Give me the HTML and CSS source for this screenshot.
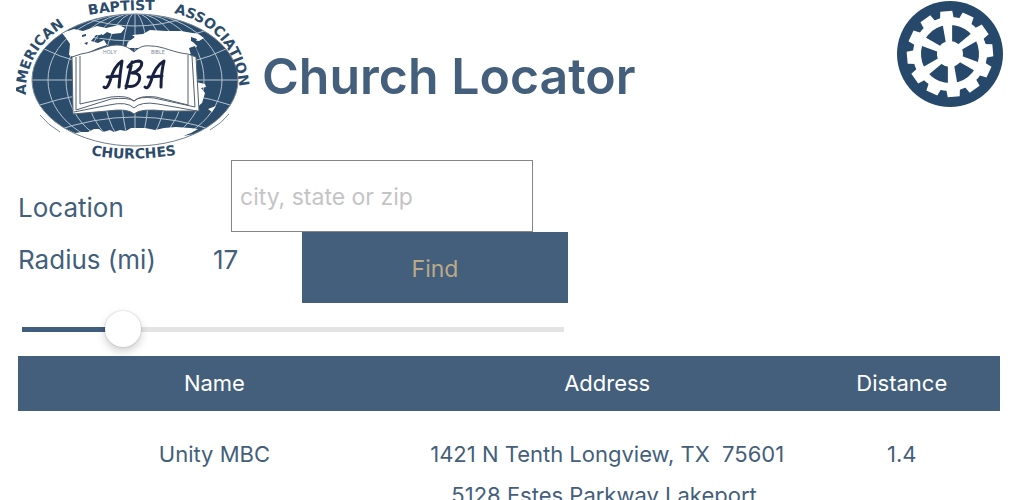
FILE: index.html
```
<!DOCTYPE html>
<html lang="en">
<head>
<meta charset="utf-8">
<meta name="viewport" content="width=device-width, initial-scale=1">
<title>Church Locator</title>
<link rel="stylesheet" href="styles.css">
</head>
<body>
<header class="header">
  <svg class="logo" viewBox="16 0 236 160" role="img" aria-label="American Baptist Association Churches">
    <defs>
      <clipPath id="globe"><ellipse cx="135" cy="80" rx="103" ry="66"/></clipPath>
      <path id="arc-left" d="M26 95 C25 62 41 36 80 18"/>
      <path id="arc-mid" d="M89 15 Q121 9 165 10"/>
      <path id="arc-right" d="M174 13 C212 22 239 48 240 98"/>
      <path id="arc-bottom" d="M91 155 Q134 163 188 153"/>
    </defs>
    <g clip-path="url(#globe)">
      <rect x="30" y="12" width="210" height="136" fill="#2c4c6c"/>
      <g class="grid-lines">
        <ellipse cx="135" cy="80" rx="87" ry="67"/>
        <ellipse cx="135" cy="80" rx="69" ry="67"/>
        <ellipse cx="135" cy="80" rx="50" ry="67"/>
        <ellipse cx="135" cy="80" rx="32" ry="67"/>
        <ellipse cx="135" cy="80" rx="14" ry="67"/>
        <path d="M30 80H240M135 14V146M35 45Q135 95 235 45M55 28Q135 54 215 28M85 18Q135 34 185 18M33 107Q135 73 237 107M52 132Q135 102 218 132"/>
      </g>
      <path fill="#fff" d="M62 33L74 29L83 31L97 26L106 28L119 25L125 28L121 33L112 34L107 32L103 35L96 35L91 41L98 43L104 40L107 45L98 48L89 52L83 57L75 58L69 55L70 44L66 38Z"/>
      <path fill="#fff" d="M126 48L128 42L135 37L132 35L143 34L150 30L166 31L181 31L198 34L204 38L199 41L191 40L197 46L192 54L157 54L148 50L140 48Z"/>
      <path fill="#fff" d="M196 82L205 84L206 87L201 88L205 93L202 103L196 108ZM208 109L216 106L212 112ZM66 129L75 133L82 132L88 132L94 129L99 129L103 132L110 130L114 132L120 130L126 131L131 128L145 128L155 130L164 128L176 127L190 128L198 129L191 133L183 136L201 133L190 148H80Z"/>
      <path fill="#2c4c6c" d="M82 35l4-1 0 2-4 1zM84 43l4-1-1 3zM98 36l4-2 1 3-5 2zM191 37l6 2-2 4-4-2zM189 48l6-2 3 7-7 2z"/>
    </g>
    <ellipse class="thin" cx="135" cy="80" rx="103" ry="66"/>
    <path class="thin" d="M40 115Q48 125 60 132M210 130Q222 123 229 114"/>
    <path class="book" d="M72 57L81 54C95 52 106 45 117 45C126 45 130 49 134 52C139 47 144 45 151 46C163 46 174 53 188 54L196 57L199 111L166 111Q140 108 134 114Q128 108 107 111L73 114Z"/>
    <path class="book-lines" d="M76 57L76 110L111 99Q128 97 134 101Q139 96 154 98L195 107L192 56M80 56V104M188 55V105M74 112L109 105Q127 101 134 108Q141 101 158 104L197 111M80 104L111 97Q128 95 134 101M188 105L156 97Q140 95 134 101"/>
    <g class="initials">
      <path d="M104 87Q107 90 110 81Q114 66 122 61Q120 73 119 87M107 77L119 76"/>
      <path d="M132 62L126 88M128 67Q132 61 139 61Q144 62 140 68Q137 72 132 73Q142 73 139 81Q136 88 126 86"/>
      <path d="M145 87Q148 90 151 81Q155 66 164 61Q161 73 161 87M148 77L162 76"/>
    </g>
    <g class="tiny"><text x="103" y="54">HOLY</text><text x="151" y="54">BIBLE</text></g>
    <g class="logo-text">
      <text><textPath href="#arc-left">AMERICAN</textPath></text>
      <text><textPath href="#arc-mid">BAPTIST</textPath></text>
      <text><textPath href="#arc-right">ASSOCIATION</textPath></text>
      <text><textPath href="#arc-bottom">CHURCHES</textPath></text>
    </g>
  </svg>
  <h1 class="title">Church Locator</h1>
  <svg class="wheel" viewBox="-54 -54 108 108" role="img" aria-label="Settings">
    <defs><path id="tooth" d="M-6 -43H6L7 -34H-7Z"/><path id="spoke" d="M-5 -33H5L3 -10H-3Z"/></defs>
    <circle r="53" fill="#26486a"/>
    <g fill="#fff" transform="rotate(-5)">
      <circle r="33" fill="none" stroke="#fff" stroke-width="8"/>
      <circle r="13"/>
      <use href="#tooth"/><use href="#tooth" transform="rotate(30)"/><use href="#tooth" transform="rotate(60)"/><use href="#tooth" transform="rotate(90)"/><use href="#tooth" transform="rotate(120)"/><use href="#tooth" transform="rotate(150)"/><use href="#tooth" transform="rotate(180)"/><use href="#tooth" transform="rotate(210)"/><use href="#tooth" transform="rotate(240)"/><use href="#tooth" transform="rotate(270)"/><use href="#tooth" transform="rotate(300)"/><use href="#tooth" transform="rotate(330)"/>
      <use href="#spoke"/><use href="#spoke" transform="rotate(60)"/><use href="#spoke" transform="rotate(120)"/><use href="#spoke" transform="rotate(180)"/><use href="#spoke" transform="rotate(240)"/><use href="#spoke" transform="rotate(300)"/>
    </g>
  </svg>
</header>
<main class="main">
  <form class="search">
    <div class="location-row">
      <label class="location-label" for="location">Location</label>
      <input class="location" id="location" type="text" placeholder="city, state or zip">
    </div>
    <div class="radius-row">
      <label for="radius">Radius (mi)</label>
      <output for="radius">17</output>
      <button class="find" type="button">Find</button>
    </div>
    <input class="slider" id="radius" type="range" min="0" max="85" value="14">
  </form>
  <table class="results">
    <thead><tr><th class="wide">Name</th><th class="wide">Address</th><th>Distance</th></tr></thead>
    <tbody>
      <tr><td>Unity MBC</td><td>1421 N Tenth Longview, TX&nbsp; 75601</td><td>1.4</td></tr>
      <tr><td></td><td>5128 Estes Parkway Lakeport,</td><td></td></tr>
    </tbody>
  </table>
</main>
</body>
</html>
```
FILE: styles.css
```
* { box-sizing: border-box; }
body {
  margin: 0;
  background: #fff;
  color: #435f7b;
  font-family: Inter, "Liberation Sans", sans-serif;
  font-size: 26px;
  overflow-x: hidden;
}
.header {
  display: flex;
  align-items: flex-start;
  padding: 0 20px 0 16px;
}
.logo { width: 236px; height: 160px; flex: none; }
.title {
  flex: 1;
  margin: 0 0 0 10px;
  font-size: 50px;
  line-height: 152px;
  font-weight: 600;
}
.wheel { width: 108px; height: 108px; flex: none; }
.grid-lines { fill: none; stroke: #b3c2cf; stroke-width: 1; }
.thin { fill: none; stroke: #778795; stroke-width: 1; }
.book { fill: #fff; stroke: #53616f; stroke-width: 1; }
.book-lines { fill: none; stroke: #53616f; stroke-width: 1; }
.initials { fill: none; stroke: #18213f; stroke-width: 3; stroke-linecap: round; stroke-linejoin: round; }
.tiny { fill: #7c8794; font-size: 5px; }
.logo-text { fill: #2c4c6c; font: bold 14px "DejaVu Sans", sans-serif; }

.main { padding: 0 24px 0 18px; }
.search { max-width: 550px; }
.location-row { display: flex; align-items: center; }
.location-label { width: 213px; padding-top: 22px; }
.location {
  width: 302px;
  height: 72px;
  padding: 2px 8px 0;
  border: 1px solid #858585;
  border-radius: 0;
  color: #435f7b;
  font: 23px Inter, sans-serif;
}
.location::placeholder { color: #c4c4c6; }
.radius-row {
  display: grid;
  grid-template-columns: 195px 89px 1fr;
  line-height: 56px;
}
.find {
  height: 71px;
  padding: 2px 0 0;
  border: 0;
  background: #435f7b;
  color: #bca987;
  font: 23px Inter, sans-serif;
}
.slider {
  appearance: none;
  display: block;
  width: calc(100% - 8px);
  height: 38px;
  margin: 7px 4px 8px;
  background: linear-gradient(to right, #3f5d7c 18%, #e4e4e4 18%) center / 100% 5px no-repeat;
}
.slider::-webkit-slider-thumb {
  appearance: none;
  width: 36px;
  height: 36px;
  border-radius: 50%;
  background: #fff;
  box-shadow: 0 4px 10px rgb(0 0 0 / 20%), 0 0 2px rgb(0 0 0 / 20%);
}
.results {
  width: 100%;
  table-layout: fixed;
  border-collapse: collapse;
  font-size: 22px;
  line-height: 41px;
  text-align: center;
}
.results th {
  height: 55px;
  padding: 0;
  background: #435f7b;
  color: #fff;
  font-weight: 400;
}
.results .wide { width: 40%; }
.results td { padding: 0; vertical-align: top; }
.results tbody tr:first-child td { padding-top: 23px; }
```
